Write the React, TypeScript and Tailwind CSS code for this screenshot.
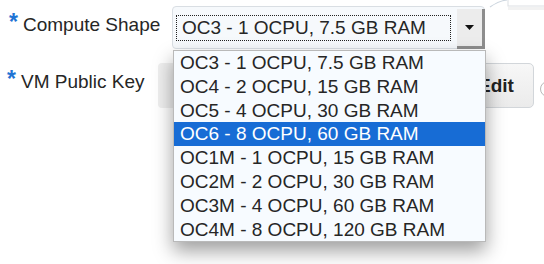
import React from 'react';

const options = [
  'OC3 - 1 OCPU, 7.5 GB RAM',
  'OC4 - 2 OCPU, 15 GB RAM',
  'OC5 - 4 OCPU, 30 GB RAM',
  'OC6 - 8 OCPU, 60 GB RAM',
  'OC1M - 1 OCPU, 15 GB RAM',
  'OC2M - 2 OCPU, 30 GB RAM',
  'OC3M - 4 OCPU, 60 GB RAM',
  'OC4M - 8 OCPU, 120 GB RAM',
];

const Required = () => (
  <span className="text-[#1f74d4] font-bold text-[23px] leading-[14px] h-[14px] mt-[2px] mr-[5px]">*</span>
);

export default function App() {
  const selected = 3;

  return (
    <div
      className="relative w-[544px] h-[264px] overflow-hidden bg-white text-[#262626] text-[19px] leading-[24px]"
      style={{ fontFamily: '"Liberation Sans", Arial, sans-serif' }}
    >
      {/* Compute Shape row */}
      <div className="flex items-start pt-[6px]">
        <div className="w-[172px] shrink-0 pl-[9px] pt-[7px] flex items-start">
          <Required />
          <span>Compute Shape</span>
        </div>
        <div className="relative shrink-0 w-[313px] h-[43px] flex border border-[#d9dee3] rounded-[4px] bg-[#f6f9fc]">
          <div className="ml-[3px] mt-[8px] w-[275px] h-[26px] border border-dotted border-[#222] pl-[5px] leading-[24px] whitespace-nowrap">
            OC3 - 1 OCPU, 7.5 GB RAM
          </div>
          <div className="ml-auto mt-[2px] -mr-px -mb-px w-[28px] flex items-center justify-center bg-[#ececec] border-r-[3px] border-b-[3px] border-[#8d8d8d]">
            <svg width="9" height="5" viewBox="0 0 9 5">
              <path d="M0 0h9L4.5 5z" fill="#111" />
            </svg>
          </div>

          {/* open list */}
          <ul className="absolute left-0 top-[43px] w-[313px] z-10 bg-[#f7fbff] border border-[#b9b9b9] shadow-[0_9px_18px_rgba(0,0,0,0.38)]">
            {options.map((o, i) => (
              <li
                key={o}
                className={`h-[23.8px] leading-[23.8px] pl-[6px] whitespace-nowrap ${
                  i === selected ? 'bg-[#176cd5] text-white' : ''
                }`}
              >
                {o}
              </li>
            ))}
          </ul>
        </div>
      </div>

      {/* VM Public Key row */}
      <div className="flex items-start mt-[14px]">
        <div className="w-[158px] shrink-0 pl-[7px] pt-[7px] flex items-start">
          <Required />
          <span>VM Public Key</span>
        </div>
        <div className="w-[294px] shrink-0 h-[45px] rounded-[4px] bg-[#efefef]" />
        <button className="ml-[6px] shrink-0 w-[76px] h-[45px] rounded-[5px] border border-[#d2d6da] bg-gradient-to-b from-[#f7f7f7] to-[#ebebeb] font-bold text-[#222] text-[19px]">
          Edit
        </button>
        <div className="ml-[6px] mt-[18px] w-[16px] h-[16px] rounded-full border border-[#b8b8b8] shrink-0" />
      </div>

      {/* callout edge, top right */}
      <svg className="absolute top-0 right-0" width="56" height="14" viewBox="0 0 56 14">
        <path d="M2 7 Q10 1 19 0" stroke="#cdd6df" strokeWidth="1.2" fill="none" />
        <rect x="20" y="-4" width="40" height="10" fill="#fff" stroke="#dcdfe3" />
        <rect x="20" y="7" width="40" height="3" fill="#000" opacity="0.05" />
      </svg>
    </div>
  );
}
